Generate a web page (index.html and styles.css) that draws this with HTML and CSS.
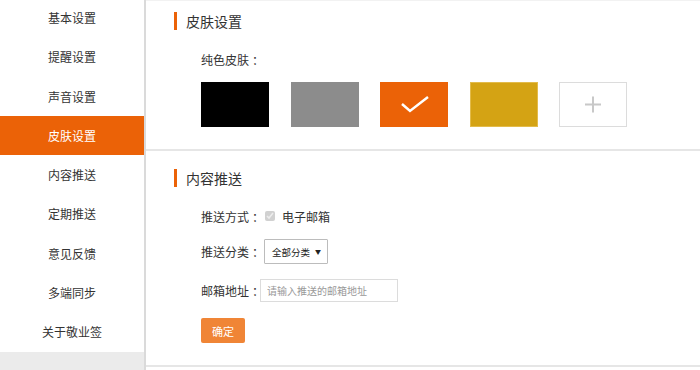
FILE: index.html
```html
<!DOCTYPE html>
<html lang="zh-CN">
<head>
  <meta charset="UTF-8">
  <meta name="viewport" content="width=device-width, initial-scale=1.0">
  <title>设置</title>
  <link rel="stylesheet" href="styles.css">
</head>
<body>
  <div class="layout">
    <aside class="sidebar">
      <ul class="menu">
        <li>基本设置</li>
        <li>提醒设置</li>
        <li>声音设置</li>
        <li class="active">皮肤设置</li>
        <li>内容推送</li>
        <li>定期推送</li>
        <li>意见反馈</li>
        <li>多端同步</li>
        <li>关于敬业签</li>
      </ul>
      <div class="menu-rest"></div>
    </aside>

    <main class="content">
      <section class="panel">
        <h2 class="panel-title">皮肤设置</h2>
        <div class="panel-body">
          <p class="field-label">纯色皮肤<span class="colon">：</span></p>
          <div class="swatches">
            <div class="swatch black"></div>
            <div class="swatch gray"></div>
            <div class="swatch orange">
              <svg width="68" height="45" viewBox="0 0 68 45">
                <path d="M22 22 L30 29 L48 15" fill="none" stroke="#fff" stroke-width="2.5"/>
              </svg>
            </div>
            <div class="swatch gold"></div>
            <div class="swatch add">
              <svg width="66" height="43" viewBox="0 0 66 43">
                <path d="M25 21.5 H41 M33 13.5 V29.5" fill="none" stroke="#c8c8c8" stroke-width="2"/>
              </svg>
            </div>
          </div>
        </div>
      </section>

      <section class="panel">
        <h2 class="panel-title title-push">内容推送</h2>
        <div class="panel-body">
          <div class="form-row row-mode">
            <span class="row-label">推送方式<span class="colon">：</span></span>
            <input type="checkbox" class="check" checked disabled>
            <span class="check-text">电子邮箱</span>
          </div>
          <div class="form-row row-type">
            <span class="row-label">推送分类<span class="colon">：</span></span>
            <div class="select"><span>全部分类</span><span class="arrow">▼</span></div>
          </div>
          <div class="form-row row-mail">
            <span class="row-label">邮箱地址<span class="colon">：</span></span>
            <input type="text" class="text-input" placeholder="请输入推送的邮箱地址">
          </div>
          <button class="btn-ok">确定</button>
        </div>
      </section>
    </main>
  </div>
</body>
</html>
```

FILE: styles.css
```css
body {
  margin: 0;
  font-family: "Noto Sans CJK SC", "Microsoft YaHei", sans-serif;
  font-size: 12px;
  color: #333;
  background: #fff;
}
.layout {
  display: flex;
  height: 370px;
  overflow: hidden;
}

/* sidebar */
.sidebar {
  width: 144px;
  border-right: 2px solid #dadada;
  display: flex;
  flex-direction: column;
}
.menu {
  list-style: none;
  margin: -2px 0 0;
  padding: 0;
}
.menu li {
  height: 39.3px;
  line-height: 39px;
  text-align: center;
}
.menu li.active {
  background: #eb6207;
  color: #fff;
}
.menu-rest {
  flex: 1;
  background: #ebebeb;
}

/* content */
.content {
  flex: 1;
  border-top: 1px solid #f2f2f2;
}
.panel {
  border-bottom: 2px solid #e6e6e6;
  padding: 0 0 22px 28px;
}
.panel-title {
  margin: 11px 0 0;
  height: 18px;
  line-height: 18px;
  border-left: 3px solid #eb6207;
  padding-left: 9px;
  font-size: 14px;
  font-weight: normal;
}
.panel-title.title-push {
  margin-top: 18px;
}
.panel-body {
  margin-left: 27px;
}
.colon {
  display: inline-block;
  padding-left: 3px;
  width: 9px;
}
.field-label {
  margin: 20px 0 0;
  line-height: 20px;
}
.swatches {
  display: flex;
  gap: 21.5px;
  margin-top: 12px;
}
.swatch {
  width: 68px;
  height: 45px;
  box-sizing: border-box;
}
.swatch svg {
  display: block;
}
.swatch.black { background: #000; }
.swatch.gray { background: #8c8c8c; }
.swatch.orange { background: #eb6207; }
.swatch.gold { background: #d4a314; border: 1px solid #e3bb4a; }
.swatch.add { border: 1px solid #dcdcdc; }

/* push form */
.form-row {
  display: flex;
  align-items: center;
}
.row-mode {
  margin-top: 19px;
  height: 20px;
}
.row-type {
  margin-top: 13px;
  height: 25px;
}
.row-mail {
  margin-top: 15px;
  height: 23px;
}
.check {
  width: 10px;
  height: 10px;
  margin: 0 0 0 4px;
}
.check-text {
  margin-left: 7px;
}
.select {
  margin-left: 3px;
  width: 64px;
  height: 25px;
  box-sizing: border-box;
  border: 1px solid #bcbcbc;
  border-radius: 1px;
  padding: 0 6px 0 7px;
  display: flex;
  align-items: center;
  justify-content: space-between;
  font-size: 9.5px;
  color: #222;
}
.select .arrow {
  font-size: 6px;
}
.text-input {
  margin: 0 0 0 -1px;
  width: 138px;
  height: 23px;
  box-sizing: border-box;
  border: 1px solid #dcdcdc;
  padding: 0 6px;
  font-family: inherit;
  font-size: 10px;
  outline: none;
}
.text-input::placeholder {
  color: #999;
}
.btn-ok {
  display: block;
  margin-top: 16px;
  width: 44px;
  height: 25px;
  border: none;
  border-radius: 2px;
  background: #f08536;
  color: #fff;
  font-family: inherit;
  font-size: 11px;
  padding: 0;
  cursor: pointer;
}
```
